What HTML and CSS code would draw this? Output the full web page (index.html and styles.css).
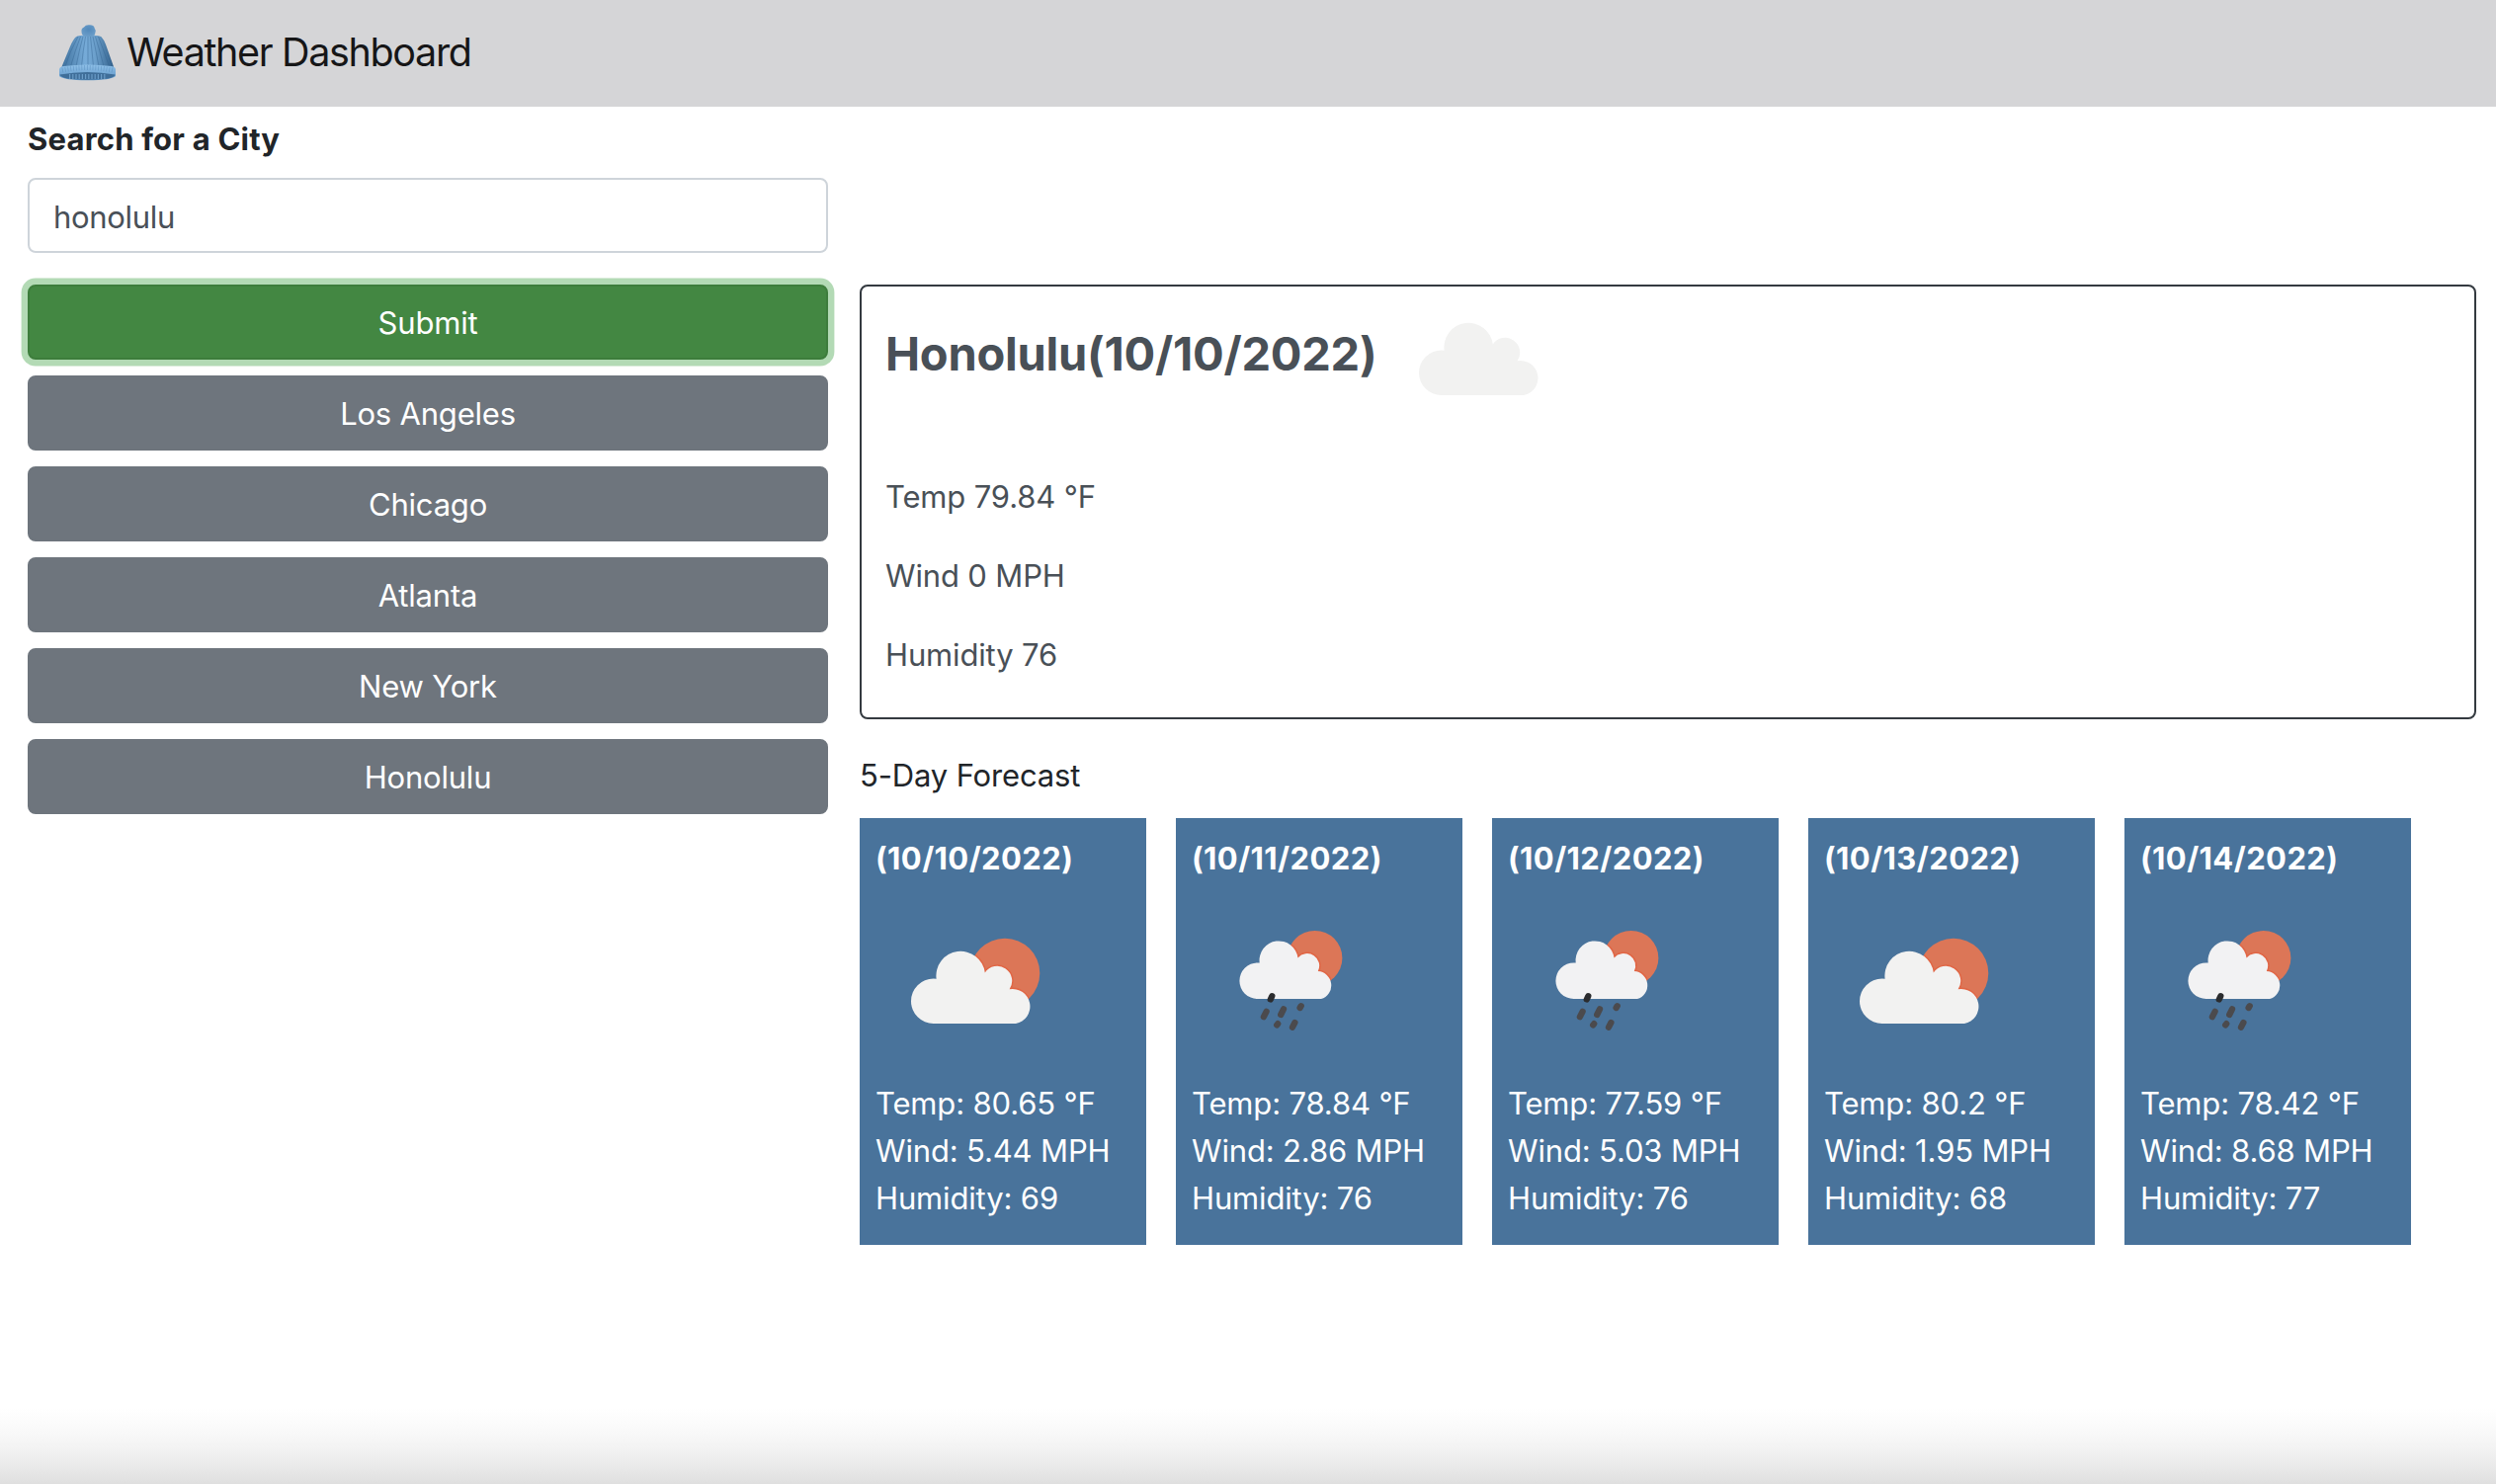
FILE: index.html
```html
<!DOCTYPE html>
<html lang="en">
<head>
<meta charset="utf-8">
<title>Weather Dashboard</title>
<link rel="stylesheet" href="styles.css">
</head>
<body>
<svg class="defs" aria-hidden="true">
  <defs>
    <linearGradient id="knit" x1="0" x2="1" y1="0" y2="0">
      <stop offset="0" stop-color="#3f719d"/><stop offset=".45" stop-color="#76abd8"/><stop offset=".65" stop-color="#6b9fcb"/><stop offset="1" stop-color="#315f8a"/>
    </linearGradient>
    <linearGradient id="brim" x1="0" x2="0" y1="0" y2="1">
      <stop offset="0" stop-color="#8fc0e8"/><stop offset="1" stop-color="#5d94c5"/>
    </linearGradient>
    <radialGradient id="pom" cx=".5" cy=".4" r=".6">
      <stop offset="0" stop-color="#5289bb"/><stop offset="1" stop-color="#6a9dc9"/>
    </radialGradient>
    <path id="cloud" d="M58.7 144A22.7 22.7 0 0 1 58.7 98.6Q60.5 98.6 61.6 98.8A24.7 24.7 0 1 1 110.8 92.4A15 15 0 0 1 135.6 109.3A17.4 17.4 0 0 1 142 144Z"/>
    <path id="rain-cloud" d="M66.7 119A18.3 18.3 0 0 1 66.7 82.4Q67.8 82.4 68.7 82.5A19.5 19.5 0 1 1 107.5 77.4A12.3 12.3 0 0 1 127.8 91A14.3 14.3 0 0 1 131 119Z"/>
    <clipPath id="sun-clip"><circle cx="131" cy="93" r="35.3"/></clipPath>
    <clipPath id="rain-sun-clip"><circle cx="124.7" cy="77.7" r="27.7"/></clipPath>
    <symbol id="partly" viewBox="0 0 200 200">
      <circle cx="131" cy="93" r="35.3" fill="#dc7657"/>
      <use href="#cloud" fill="none" stroke="#e2603d" stroke-width="3" stroke-opacity=".7" clip-path="url(#sun-clip)"/>
      <use href="#cloud" fill="#f2f2f1"/>
    </symbol>
    <symbol id="rain" viewBox="0 0 200 200">
      <circle cx="124.7" cy="77.7" r="27.7" fill="#dc7657"/>
      <use href="#rain-cloud" fill="none" stroke="#e2603d" stroke-width="3" stroke-opacity=".7" clip-path="url(#rain-sun-clip)"/>
      <use href="#rain-cloud" fill="#f2f2f3"/>
      <g stroke="#4b4a4d" stroke-width="6.3" stroke-linecap="round">
        <path stroke="#2b2c2e" d="M81.3 116.2L79.8 119.5"/>
        <path d="M75.6 131.8L72.9 137.2M93 129.4L90.2 135M110.7 126.2L109.6 128M87.2 144.2L86.2 145.4M104.4 143L102 147.6"/>
      </g>
    </symbol>
  </defs>
</svg>

<header class="header">
  <svg class="hat" viewBox="0 0 59 58" aria-hidden="true">
    <path d="M18 13.300Q20 11.500 30.500 11.500Q41 11.500 43.500 13.300Q46 16 48 21L56 43.500Q54 48 29.500 48Q5 48 3.500 43.500L12 23Q15 16 18 13.300Z" fill="url(#knit)"/>
    <path d="M20 13Q12 27 7 43M22.500 13Q17 27 12.500 43M25 13Q21 27 18 43M27.500 13Q25 27 23.500 43M30 13V43M32.500 13Q34 27 35.500 43M35 13Q38 27 41 43M37.500 13Q42 27 46 43M40.500 13Q46 27 51.500 43" fill="none" stroke="#2f5f8c" stroke-width=".8" opacity=".5"/>
    <path d="M23.500 8Q23 4.500 26 3.500Q28 .5 32 1.300Q36 1.300 36.700 4.500Q38.600 7 37.300 9.500Q37 12.500 34 13H27Q23.500 12 23.500 8Z" fill="url(#pom)"/>
    <path d="M1 46.500Q1 43.500 5 43Q30 40 54 43Q58 43.500 58 46.500V53Q54 57.200 29.500 57.200Q5 57.200 1 53Z" fill="url(#brim)"/>
    <path d="M1.500 51.500Q29 46.500 57.500 51.500Q57 56.700 29.500 56.700Q3 56.700 1.500 51.500Z" fill="#3f6e99"/>
    <path d="M11 53.500H49" stroke="#6b9dc8" stroke-width="5" stroke-dasharray="1.200 2"/>
    <path d="M4 47Q29 42 55 47" fill="none" stroke="#5a8fbe" stroke-width="5" stroke-dasharray=".8 2" opacity=".6"/>
  </svg>
  <h1 class="title">Weather Dashboard</h1>
</header>

<main class="main">
  <section class="search">
    <label class="label" for="city">Search for a City</label>
    <input class="input" id="city" type="text" value="honolulu">
    <button class="btn submit">Submit</button>
    <button class="btn">Los Angeles</button>
    <button class="btn">Chicago</button>
    <button class="btn">Atlanta</button>
    <button class="btn">New York</button>
    <button class="btn">Honolulu</button>
  </section>

  <section class="results">
    <article class="today">
      <div class="today-head">
        <h2 class="city">Honolulu(10/10/2022)</h2>
        <svg class="today-icon" viewBox="0 60 200 100"><use href="#cloud" fill="#f2f2f1"/></svg>
      </div>
      <p>Temp 79.84 °F</p>
      <p>Wind 0 MPH</p>
      <p>Humidity 76</p>
    </article>
    <h3 class="forecast-title">5-Day Forecast</h3>
    <div class="forecast">
      <article class="day"><h4>(10/10/2022)</h4><svg class="icon"><use href="#partly"/></svg><p>Temp: 80.65 °F</p><p>Wind: 5.44 MPH</p><p>Humidity: 69</p></article>
      <article class="day"><h4>(10/11/2022)</h4><svg class="icon"><use href="#rain"/></svg><p>Temp: 78.84 °F</p><p>Wind: 2.86 MPH</p><p>Humidity: 76</p></article>
      <article class="day"><h4>(10/12/2022)</h4><svg class="icon"><use href="#rain"/></svg><p>Temp: 77.59 °F</p><p>Wind: 5.03 MPH</p><p>Humidity: 76</p></article>
      <article class="day"><h4>(10/13/2022)</h4><svg class="icon"><use href="#partly"/></svg><p>Temp: 80.2 °F</p><p>Wind: 1.95 MPH</p><p>Humidity: 68</p></article>
      <article class="day"><h4>(10/14/2022)</h4><svg class="icon"><use href="#rain"/></svg><p>Temp: 78.42 °F</p><p>Wind: 8.68 MPH</p><p>Humidity: 77</p></article>
    </div>
  </section>
</main>
</body>
</html>
```
FILE: styles.css
```css
* { box-sizing: border-box; }

body {
  margin: 0;
  min-height: 1502px;
  font: 400 31px/48px Inter, "Liberation Sans", sans-serif;
  letter-spacing: -0.15px;
  color: #212529;
  background: linear-gradient(to bottom, #fff 0, #fff 1425px, #fbfbfb 1442px, #f2f2f2 1468px, #e8e8e8 1487px, #dfdfdf 1502px) no-repeat;
}

h1, h2, h3, h4, p { margin: 0; font-weight: 400; font-size: inherit; }

.defs { position: absolute; width: 0; height: 0; }

.header {
  display: flex;
  gap: 10px;
  height: 108px;
  padding: 24px 0 0 59px;
  background: #d5d5d7;
}
.hat { width: 59px; height: 58px; }
.title { font-size: 39.5px; line-height: 58px; letter-spacing: -1.35px; color: #161617; }

.main {
  display: grid;
  grid-template-columns: 810px 1636px;
  gap: 32px;
  padding: 9px 0 0 28px;
}

.search { display: flex; flex-direction: column; }
.label { font-weight: 700; letter-spacing: 0.2px; margin-bottom: 15px; }
.input {
  height: 76px;
  margin: 0 0 32px;
  padding: 13px 24px 11px;
  border: 2px solid #ced4da;
  border-radius: 8px;
  color: #495057;
  font: inherit;
  letter-spacing: -0.3px;
  background: #fff;
}
.btn {
  height: 76px;
  margin: 0 0 16px;
  padding: 13px 12px 11px;
  border: 2px solid #6e757d;
  border-radius: 8px;
  background: #6e757d;
  color: #fff;
  font: inherit;
  letter-spacing: -0.2px;
}
.submit {
  background: #438742;
  border-color: #3d7d3c;
  box-shadow: 0 0 0 6.4px #b3dab5;
}

.results { padding-top: 171px; }
.today {
  height: 440px;
  padding: 24px;
  border: 2px solid #343a40;
  border-radius: 8px;
  color: #495057;
}
.today-head { display: flex; height: 165px; }
.city { font-size: 47px; line-height: 88px; font-weight: 700; letter-spacing: -0.25px; }
.today-icon { width: 200px; height: 100px; margin: 2px 0 0 7px; }
.today p { margin-bottom: 32px; }

.forecast-title { margin: 33px 0 19px; }
.forecast { display: flex; gap: 30px; }
.day {
  display: flex;
  flex-direction: column;
  width: 290px;
  height: 432px;
  padding: 17px 16px 0;
  background: #49739b;
  color: #fff;
}
.day h4 { font-weight: 700; letter-spacing: 0.4px; }
.icon { width: 200px; height: 200px; margin: -1px 0 1px; }
```
